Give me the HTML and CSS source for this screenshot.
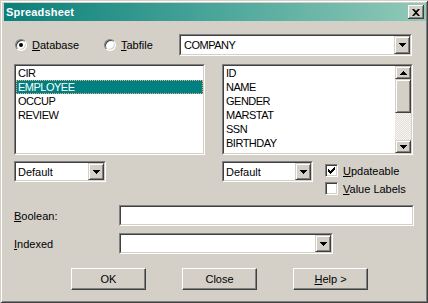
FILE: index.html
```html
<!DOCTYPE html>
<html>
<head>
<meta charset="utf-8">
<link rel="stylesheet" href="styles.css">
</head>
<body>
<div class="window">
  <div class="titlebar">
    <span class="title">Spreadsheet</span>
    <span class="close"><svg width="8" height="7" viewBox="0 0 8 7"><path d="M0 0h2l2 2 2-2h2L5 3.5 8 7H6L4 5 2 7H0l3-3.5z" fill="#000"/></svg></span>
  </div>
  <div class="body">
    <div class="row-top">
      <label class="radio r1"><span class="circle checked"></span><span><u>D</u>atabase</span></label>
      <label class="radio r2"><span class="circle"></span><span><u>T</u>abfile</span></label>
      <div class="combo company">
        <div class="inner">
          <span class="value caps">COMPANY</span>
          <span class="ddbtn"><svg width="7" height="4" viewBox="0 0 7 4"><path d="M0 0H7V1H6V2H5V3H4V4H3V3H2V2H1V1H0Z"/></svg></span>
        </div>
      </div>
    </div>

    <div class="row-lists">
      <div class="listbox">
        <div class="inner">
          <div class="items">
            <div class="item">CIR</div>
            <div class="item selected">EMPLOYEE</div>
            <div class="item">OCCUP</div>
            <div class="item">REVIEW</div>
          </div>
        </div>
      </div>
      <div class="listbox">
        <div class="inner">
          <div class="items">
            <div class="item">ID</div>
            <div class="item">NAME</div>
            <div class="item">GENDER</div>
            <div class="item">MARSTAT</div>
            <div class="item">SSN</div>
            <div class="item">BIRTHDAY</div>
          </div>
          <div class="scrollbar">
            <span class="sbbtn"><svg width="7" height="4" viewBox="0 0 7 4"><path d="M3 0H4V1H5V2H6V3H7V4H0V3H1V2H2V1H3Z"/></svg></span>
            <span class="thumb"></span>
            <span class="track"></span>
            <span class="sbbtn"><svg width="7" height="4" viewBox="0 0 7 4"><path d="M0 0H7V1H6V2H5V3H4V4H3V3H2V2H1V1H0Z"/></svg></span>
          </div>
        </div>
      </div>
    </div>

    <div class="row-combos">
      <div class="combo small left">
        <div class="inner">
          <span class="value">Default</span>
          <span class="ddbtn"><svg width="7" height="4" viewBox="0 0 7 4"><path d="M0 0H7V1H6V2H5V3H4V4H3V3H2V2H1V1H0Z"/></svg></span>
        </div>
      </div>
      <div class="combo small right">
        <div class="inner">
          <span class="value">Default</span>
          <span class="ddbtn"><svg width="7" height="4" viewBox="0 0 7 4"><path d="M0 0H7V1H6V2H5V3H4V4H3V3H2V2H1V1H0Z"/></svg></span>
        </div>
      </div>
      <div class="checks">
        <label class="check"><span class="box"><svg width="7" height="7" viewBox="0 0 7 7"><path d="M0 2H1V3H2V4H3V3H4V2H5V1H6V0H7V3H6V4H5V5H4V6H3V7H2V6H1V5H0Z"/></svg></span><span><u>U</u>pdateable</span></label>
        <label class="check"><span class="box"></span><span><u>V</u>alue Labels</span></label>
      </div>
    </div>

    <div class="row-field">
      <span class="flabel"><u>B</u>oolean:</span>
      <div class="combo textbox"><div class="inner"></div></div>
    </div>

    <div class="row-field indexed">
      <span class="flabel"><u>I</u>ndexed</span>
      <div class="combo idx">
        <div class="inner">
          <span class="value"></span>
          <span class="ddbtn"><svg width="7" height="4" viewBox="0 0 7 4"><path d="M0 0H7V1H6V2H5V3H4V4H3V3H2V2H1V1H0Z"/></svg></span>
        </div>
      </div>
    </div>

    <div class="row-buttons">
      <button class="btn">OK</button>
      <button class="btn">Close</button>
      <button class="btn"><u>H</u>elp &gt;</button>
    </div>
  </div>
</div>
</body>
</html>
```

FILE: styles.css
```css
* { box-sizing: border-box; }
html, body { margin: 0; padding: 0; }
body {
  width: 428px;
  height: 303px;
  background: #d4d0c8;
  font-family: "Liberation Sans", Arial, sans-serif;
  font-size: 11px;
  color: #000;
  overflow: hidden;
}
u { text-decoration: underline; text-underline-offset: 1px; }

.window {
  width: 428px;
  height: 303px;
  background: #d4d0c8;
  padding: 3px 2px 4px 4px;
  box-shadow: inset 1px 1px #d4d0c8, inset -1px -1px #404040, inset 2px 2px #fff, inset -2px -2px #808080;
}

.titlebar {
  height: 18px;
  display: flex;
  align-items: center;
  justify-content: space-between;
  padding: 0 2px 0 2px;
  background: linear-gradient(to right, #0a7f7a 0%, #4aa69a 50%, #92c9b8 100%);
}
.title {
  color: #fff;
  font-weight: bold;
  font-size: 11px;
  letter-spacing: 0.2px;
}
.close {
  width: 16px;
  height: 14px;
  background: #d4d0c8;
  display: flex;
  align-items: center;
  justify-content: center;
  box-shadow: inset -1px -1px #404040, inset 1px 1px #fff, inset -2px -2px #808080;
}

.body {
  padding: 13px 0 0 10px;
}

/* top row */
.row-top {
  display: flex;
  align-items: center;
  height: 22px;
}
.radio {
  display: flex;
  align-items: center;
  gap: 5px;
}
.r1 { width: 89px; margin-left: 1px; }
.r2 { width: 75px; }
.circle {
  position: relative;
  width: 12px;
  height: 12px;
  border-radius: 50%;
  border: 1px solid;
  border-color: #808080 #fff #fff #808080;
  background: #fff;
  box-shadow: inset 1px 1px #404040, inset -1px -1px #d4d0c8;
}
.circle.checked::after {
  content: "";
  position: absolute;
  left: 3px;
  top: 3px;
  width: 4px;
  height: 4px;
  border-radius: 50%;
  background: #000;
}

/* sunken fields */
.combo, .listbox {
  border: 1px solid;
  border-color: #808080 #fff #fff #808080;
}
.combo > .inner, .listbox > .inner {
  height: 100%;
  border: 1px solid;
  border-color: #404040 #d4d0c8 #d4d0c8 #404040;
  background: #fff;
  display: flex;
}
.combo > .inner { align-items: stretch; }
.value {
  flex: 1;
  display: flex;
  align-items: center;
  padding-left: 2px;
}
.caps { letter-spacing: -0.5px; }
.ddbtn {
  width: 16px;
  margin: 0;
  display: flex;
  align-items: center;
  justify-content: center;
  background: #d4d0c8;
  border: 1px solid;
  border-color: #d4d0c8 #404040 #404040 #d4d0c8;
  box-shadow: inset 1px 1px #fff, inset -1px -1px #808080;
}
.company { width: 233px; height: 22px; }
.company .value { padding-left: 3px; }

/* lists */
.row-lists {
  display: flex;
  gap: 17px;
  margin-top: 8px;
}
.listbox {
  width: 191px;
  height: 91px;
}
.items {
  flex: 1;
  display: flex;
  flex-direction: column;
}
.item {
  height: 14px;
  line-height: 14px;
  padding-left: 2px;
  letter-spacing: -0.5px;
  white-space: nowrap;
}
.item.selected {
  background: #008080;
  color: #fff;
  outline: 1px dotted #f0b080;
  outline-offset: -1px;
}
.scrollbar {
  width: 16px;
  display: flex;
  flex-direction: column;
}
.sbbtn, .thumb {
  display: flex;
  align-items: center;
  justify-content: center;
  background: #d4d0c8;
  border: 1px solid;
  border-color: #d4d0c8 #404040 #404040 #d4d0c8;
  box-shadow: inset 1px 1px #fff, inset -1px -1px #808080;
}
.sbbtn { height: 13px; }
.thumb { height: 34px; }
.track {
  flex: 1;
  background: repeating-conic-gradient(#e4e0d8 0 25%, #f6f4f0 0 50%) 0 0 / 2px 2px;
}

/* combos row */
.row-combos {
  display: flex;
  align-items: flex-start;
  margin-top: 6px;
}
.small { width: 92px; height: 21px; }
.small.right { width: 91px; margin-left: 116px; }
.checks {
  display: flex;
  flex-direction: column;
  gap: 5px;
  margin-left: 12px;
  margin-top: 3px;
}
.check {
  display: flex;
  align-items: center;
  gap: 5px;
  height: 13px;
}
.box {
  width: 13px;
  height: 13px;
  border: 1px solid;
  border-color: #808080 #fff #fff #808080;
  background: #fff;
  box-shadow: inset 1px 1px #404040, inset -1px -1px #d4d0c8;
  display: flex;
  align-items: center;
  justify-content: center;
}

/* fields */
.row-field {
  display: flex;
  align-items: center;
  margin-top: 10px;
}
.row-field.indexed { margin-top: 7px; }
.flabel { width: 105px; }
.textbox { width: 295px; height: 21px; }
.idx { width: 214px; height: 21px; }

/* buttons */
.row-buttons {
  display: flex;
  gap: 36px;
  margin-top: 14px;
  margin-left: 57px;
}
.btn {
  width: 75px;
  height: 22px;
  padding: 0;
  font-family: inherit;
  font-size: 11px;
  color: #000;
  background: #d4d0c8;
  border: 1px solid;
  border-color: #fff #404040 #404040 #fff;
  box-shadow: inset -1px -1px #808080;
  border-radius: 0;
}
```
